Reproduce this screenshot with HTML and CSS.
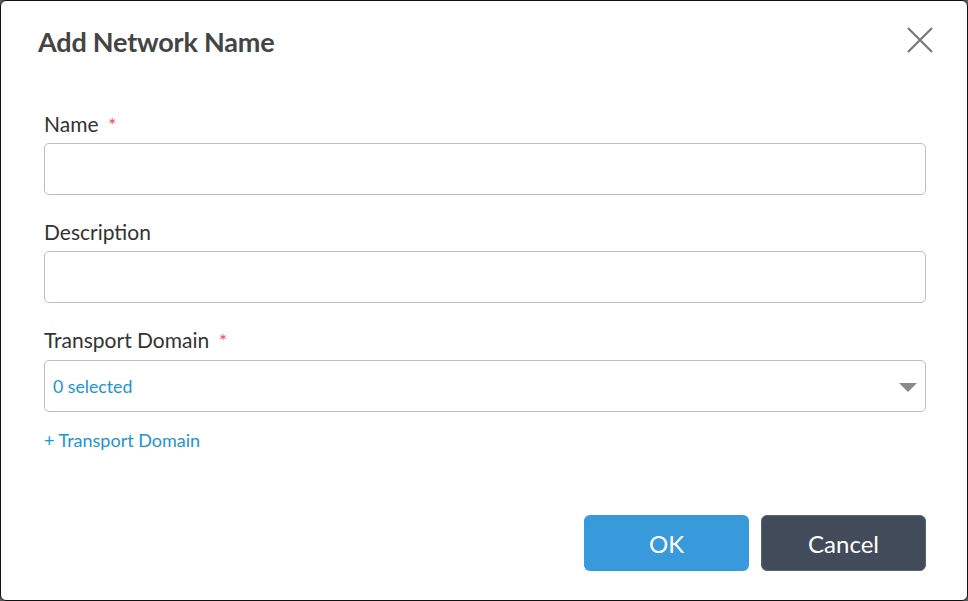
FILE: index.html
```html
<!DOCTYPE html>
<html lang="en">
<head>
<meta charset="utf-8">
<title>Add Network Name</title>
<link rel="stylesheet" href="styles.css">
</head>
<body>
<div class="dialog">
  <div class="header">
    <h1 class="title">Add Network Name</h1>
    <button class="close" aria-label="Close">
      <svg width="26" height="26" viewBox="0 0 26 26"><path d="M1 1 L25 25 M25 1 L1 25" stroke="#777" stroke-width="2.2" fill="none"/></svg>
    </button>
  </div>
  <div class="form">
    <div class="field">
      <label class="label">Name <span class="req">*</span></label>
      <div class="input"></div>
    </div>
    <div class="field">
      <label class="label">Description</label>
      <div class="input"></div>
    </div>
    <div class="field last">
      <label class="label">Transport Domain <span class="req">*</span></label>
      <div class="input select"><span class="selected">0 selected</span><span class="caret"></span></div>
    </div>
    <a class="add-link">+ Transport Domain</a>
  </div>
  <div class="footer">
    <button class="btn ok">OK</button>
    <button class="btn cancel">Cancel</button>
  </div>
</div>
</body>
</html>
```
FILE: styles.css
```css
html, body {
  margin: 0;
  padding: 0;
  background: #5a5a5a;
}
body {
  font-family: Lato, "Open Sans", sans-serif;
  width: 968px;
  height: 601px;
}
.dialog {
  box-sizing: border-box;
  width: 968px;
  height: 601px;
  background: #fff;
  border: 1px solid #111;
  border-radius: 6px;
  display: flex;
  flex-direction: column;
}
.header {
  display: flex;
  justify-content: space-between;
  align-items: center;
  height: 40px;
  padding: 20px 34px 1px 37px;
}
.title {
  margin: 0;
  font-size: 27px;
  font-weight: 700;
  color: #444;
  letter-spacing: -0.2px;
}
.close {
  border: 0;
  background: none;
  padding: 0;
  width: 26px;
  height: 26px;
  display: flex;
  margin-top: -2px;
}
.form {
  padding: 50px 41px 0 43px;
}
.field {
  margin-bottom: 25px;
}
.field.last {
  margin-bottom: 0;
}
.label {
  display: block;
  font-size: 21px;
  line-height: 24px;
  color: #333;
  margin-bottom: 7px;
}
.field.last .label {
  margin-bottom: 8px;
}
.req {
  color: #e8506a;
  margin-left: 4px;
  font-size: 20px;
}
.input {
  box-sizing: border-box;
  height: 52px;
  border: 1px solid #bdbdbd;
  border-radius: 5px;
  background: #fff;
}
.select {
  display: flex;
  align-items: center;
  justify-content: space-between;
  padding: 0 8px 0 8px;
}
.selected {
  font-size: 17.7px;
  color: #1b95d4;
}
.caret {
  width: 0;
  height: 0;
  border-left: 9px solid transparent;
  border-right: 9px solid transparent;
  border-top: 9px solid #8a8a8a;
  margin-top: 2px;
}
.add-link {
  display: inline-block;
  margin-top: 17px;
  font-size: 18px;
  line-height: 22px;
  color: #1b95d4;
}
.footer {
  margin-top: auto;
  display: flex;
  justify-content: flex-end;
  gap: 12px;
  padding: 0 41px 29px 0;
}
.btn {
  width: 165px;
  height: 56px;
  border: 0;
  border-radius: 6px;
  font-family: Lato, "Open Sans", sans-serif;
  font-size: 24px;
  color: #fff;
}
.ok {
  background: #3899db;
}
.cancel {
  background: #414b5a;
  border: 1px solid #5a6370;
}
```
